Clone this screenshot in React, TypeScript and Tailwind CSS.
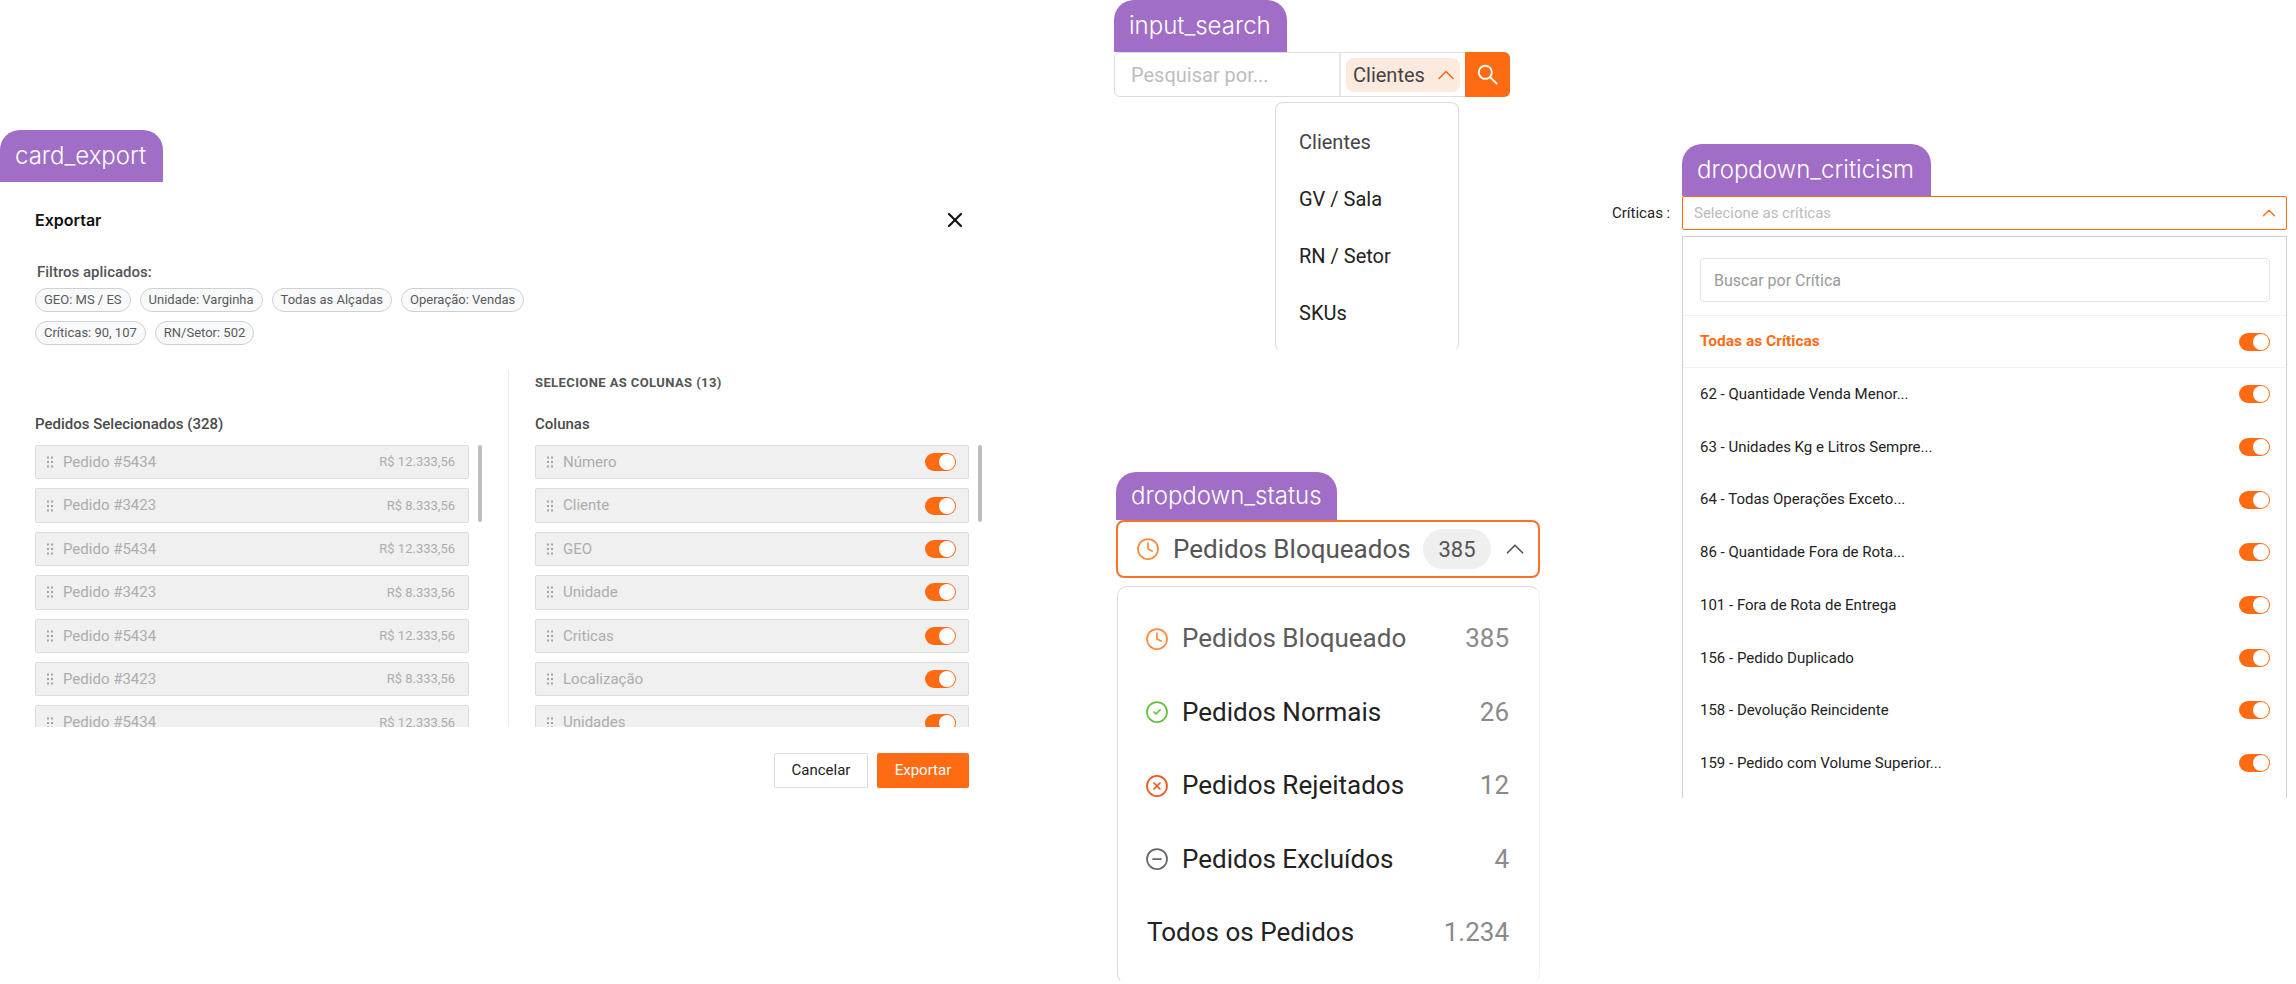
import React from 'react';
import { ChevronUp, CircleCheck, CircleMinus, CircleX, Clock, X } from 'lucide-react';

const pedidos = [
    { id: '#5434', valor: 'R$ 12.333,56' },
    { id: '#3423', valor: 'R$ 8.333,56' },
    { id: '#5434', valor: 'R$ 12.333,56' },
    { id: '#3423', valor: 'R$ 8.333,56' },
    { id: '#5434', valor: 'R$ 12.333,56' },
    { id: '#3423', valor: 'R$ 8.333,56' },
    { id: '#5434', valor: 'R$ 12.333,56' },
];
const colunas = ['Número', 'Cliente', 'GEO', 'Unidade', 'Criticas', 'Localização', 'Unidades'];
const filtros = ['GEO: MS / ES', 'Unidade: Varginha', 'Todas as Alçadas', 'Operação: Vendas', 'Críticas: 90, 107', 'RN/Setor: 502'];
const criticas = [
    '62 - Quantidade Venda Menor...',
    '63 - Unidades Kg e Litros Sempre...',
    '64 - Todas Operações Exceto...',
    '86 - Quantidade Fora de Rota...',
    '101 - Fora de Rota de Entrega',
    '156 - Pedido Duplicado',
    '158 - Devolução Reincidente',
    '159 - Pedido com Volume Superior...',
];

const Toggle: React.FC = () => (
    <span className="flex h-[18px] w-[31px] shrink-0 items-center justify-end rounded-full bg-[#ff6b13] pr-[1px]">
        <span className="h-[16px] w-[16px] rounded-full bg-white" />
    </span>
);

const Handle: React.FC = () => (
    <svg width="8" height="12" viewBox="0 0 8 12" className="shrink-0 fill-[#a3a3a3]">
        {[0, 4.5, 9].map((y) => (
            <g key={y}>
                <rect x="1" y={y + 0.5} width="2" height="2" />
                <rect x="5" y={y + 0.5} width="2" height="2" />
            </g>
        ))}
    </svg>
);

const Tab: React.FC<{ label: string; className: string }> = ({ label, className }) => (
    <div className={`flex items-center rounded-t-[20px] bg-[#a06ec6] pl-[15px] font-['Inter',sans-serif] text-[24px] font-light text-white ${className}`}>
        {label}
    </div>
);

const Scrollbar: React.FC = () => <div className="h-[77px] w-[4px] shrink-0 rounded-full bg-[#bdbdbd]" />;

const CardExport: React.FC = () => (
    <section className="absolute left-0 top-[130px] w-[1006px]">
        <Tab label="card_export" className="h-[52px] w-[163px]" />
        <div className="h-[633px] pl-[35px]">
            <div className="mt-[26px] flex h-[24px] items-center justify-between pr-[39px]">
                <h2 className="font-['Inter',sans-serif] text-[16px] font-semibold text-[#111]">Exportar</h2>
                <X size={24} strokeWidth={2.2} className="text-[#111]" />
            </div>
            <div className="pt-[32px]">
                <p className="pl-[2px] text-[15px] font-medium leading-[16px] text-[#555]">Filtros aplicados:</p>
                <div className="mt-[8px] flex w-[490px] flex-wrap gap-[9px]">
                    {filtros.map((filtro) => (
                        <span key={filtro} className="flex h-[24px] items-center rounded-full border border-[#d0d0d0] bg-[#f8f9fb] px-[8px] text-[13px] text-[#5a5a5a]">
                            {filtro}
                        </span>
                    ))}
                </div>
            </div>
            <div className="mt-[25px] flex h-[357px] overflow-hidden">
                <div className="w-[473px] shrink-0 pt-[46px]">
                    <h3 className="text-[15px] font-medium leading-[16px] text-[#4a4a4a]">Pedidos Selecionados (328)</h3>
                    <div className="mt-[13px] flex gap-[9px]">
                        <ul className="flex w-[434px] shrink-0 flex-col gap-[9px]">
                            {pedidos.map((pedido, i) => (
                                <li key={i} className="flex h-[34.4px] shrink-0 items-center rounded-[2px] border border-[#dcdcdc] bg-[#f0f0f0] pl-[10px] pr-[13px]">
                                    <Handle />
                                    <span className="ml-[9px] text-[15px] text-[#adadad]">Pedido {pedido.id}</span>
                                    <span className="ml-auto text-[13px] text-[#adadad]">{pedido.valor}</span>
                                </li>
                            ))}
                        </ul>
                        <Scrollbar />
                    </div>
                </div>
                <div className="border-l border-[#ececec] pl-[26px] pt-[5px]">
                    <h3 className="text-[13px] font-bold leading-[16px] tracking-[0.4px] text-[#555]">SELECIONE AS COLUNAS (13)</h3>
                    <h3 className="mt-[25px] text-[15px] font-medium leading-[16px] text-[#4a4a4a]">Colunas</h3>
                    <div className="mt-[13px] flex gap-[9px]">
                        <ul className="flex w-[434px] shrink-0 flex-col gap-[9px]">
                            {colunas.map((coluna) => (
                                <li key={coluna} className="flex h-[34.4px] shrink-0 items-center rounded-[2px] border border-[#dcdcdc] bg-[#f0f0f0] pl-[10px] pr-[12px]">
                                    <Handle />
                                    <span className="ml-[9px] text-[15px] text-[#adadad]">{coluna}</span>
                                    <span className="ml-auto"><Toggle /></span>
                                </li>
                            ))}
                        </ul>
                        <Scrollbar />
                    </div>
                </div>
            </div>
            <div className="mt-[26px] flex justify-end gap-[9px] pr-[37px]">
                <button className="h-[35px] w-[94px] rounded-[2px] border border-[#dcdcdc] bg-white text-[15px] text-[#222]">Cancelar</button>
                <button className="h-[35px] w-[92px] rounded-[2px] bg-[#ff6b13] text-[15px] text-white">Exportar</button>
            </div>
        </div>
    </section>
);

const InputSearch: React.FC = () => (
    <section className="absolute left-[1114px] top-0 w-[396px]">
        <Tab label="input_search" className="h-[52px] w-[173px]" />
        <div className="flex h-[45px] rounded-[6px] border border-[#dddddd]">
            <span className="flex w-[224px] items-center pl-[16px] text-[20px] text-[#bdbdbd]">Pesquisar por...</span>
            <div className="flex flex-1 items-center border-l-2 border-[#e8e8e8] pl-[5px]">
                <span className="flex h-[34px] w-[114px] items-center justify-between rounded-[8px] bg-[#fdeadf] pl-[7px] text-[20px] text-[#444]">
                    Clientes
                    <ChevronUp size={28} strokeWidth={1.4} className="text-[#ff6b13]" />
                </span>
            </div>
            <span className="-my-px -mr-px flex w-[45px] items-center justify-center rounded-r-[6px] bg-[#ff6b13]">
                <svg width="21" height="21" viewBox="0 0 24 24" fill="none" stroke="white" strokeWidth="2.2" strokeLinecap="round">
                    <circle cx="9.5" cy="9.5" r="7.5" />
                    <path d="M15 15l7.5 7.5" />
                </svg>
            </span>
        </div>
        <ul className="ml-[161px] mt-[5px] flex h-[250px] w-[184px] flex-col justify-center rounded-[8px] border border-[#dcdcdc] border-b-transparent pl-[23px] text-[20px] text-[#222]">
            {['Clientes', 'GV / Sala', 'RN / Setor', 'SKUs'].map((item, i) => (
                <li key={item} className={`flex h-[57px] items-center ${i === 0 ? 'text-[#444]' : ''}`}>{item}</li>
            ))}
        </ul>
    </section>
);

const statusItems = [
    { label: 'Pedidos Bloqueado', count: '385', icon: <Clock size={24} strokeWidth={1.75} className="text-[#ff8a3d]" />, tone: 'text-[#5c5c5c]' },
    { label: 'Pedidos Normais', count: '26', icon: <CircleCheck size={24} strokeWidth={1.75} className="text-[#62c23f]" />, tone: 'text-[#222]' },
    { label: 'Pedidos Rejeitados', count: '12', icon: <CircleX size={24} strokeWidth={1.75} className="text-[#f0561d]" />, tone: 'text-[#222]' },
    { label: 'Pedidos Excluídos', count: '4', icon: <CircleMinus size={24} strokeWidth={1.75} className="text-[#666]" />, tone: 'text-[#222]' },
];

const DropdownStatus: React.FC = () => (
    <section className="absolute left-[1116px] top-[472px] w-[424px]">
        <Tab label="dropdown_status" className="h-[48px] w-[221px]" />
        <div className="flex h-[58px] items-center rounded-[8px] border-2 border-[#f5742a] pl-[18px] pr-[8px]">
            <Clock size={24} strokeWidth={1.75} className="text-[#ff8a3d]" />
            <span className="ml-[13px] text-[26px] text-[#555]">Pedidos Bloqueados</span>
            <span className="ml-auto flex h-[40px] w-[68px] items-center justify-center rounded-full bg-[#efefef] text-[22px] text-[#555]">385</span>
            <ChevronUp size={30} strokeWidth={1.4} className="ml-[9px] text-[#555]" />
        </div>
        <div className="ml-px mt-[8px] h-[398px] rounded-[10px] border border-[#dcdcdc] border-b-transparent border-r-[#f4f4f4] pl-[27px] pr-[30px] pt-[15px]">
            {statusItems.map((item) => (
                <div key={item.label} className="flex h-[73.5px] items-center text-[26px]">
                    {item.icon}
                    <span className={`ml-[13px] ${item.tone}`}>{item.label}</span>
                    <span className="ml-auto text-[#8a8a8a]">{item.count}</span>
                </div>
            ))}
            <div className="flex h-[73.5px] items-center pl-[2px] text-[26px]">
                <span className="text-[#222]">Todos os Pedidos</span>
                <span className="ml-auto text-[#8a8a8a]">1.234</span>
            </div>
        </div>
    </section>
);

const DropdownCriticism: React.FC = () => (
    <section className="absolute left-[1612px] top-[144px] w-[675px]">
        <Tab label="dropdown_criticism" className="ml-[70px] h-[52px] w-[249px]" />
        <div className="flex items-center">
            <span className="w-[70px] shrink-0 text-[15px] text-[#222]">Críticas :</span>
            <div className="flex h-[34px] w-[605px] items-center justify-between rounded-[2px] border-[1.5px] border-[#ff6b13] pl-[11px] pr-[6px] text-[15px] text-[#bbbbbb]">
                Selecione as críticas
                <ChevronUp size={22} strokeWidth={1.4} className="text-[#ff6b13]" />
            </div>
        </div>
        <div className="ml-[70px] mt-[6px] h-[562px] w-[605px] overflow-hidden border border-b-0 border-[#d0d0d0]">
            <div className="border-b border-[#f0f0f0] pb-[13px] pl-[17px] pr-[16px] pt-[21px]">
                <div className="flex h-[44px] items-center rounded-[4px] border border-[#e4e4e4] pl-[13px] pt-[1px] text-[16px] text-[#9a9a9a]">Buscar por Crítica</div>
            </div>
            <div className="flex h-[52px] items-center justify-between border-b border-[#f0f0f0] pl-[17px] pr-[16px] text-[15.5px] font-bold text-[#ff6b13]">
                Todas as Críticas
                <Toggle />
            </div>
            {criticas.map((critica) => (
                <div key={critica} className="flex h-[52.7px] items-center justify-between pl-[17px] pr-[16px] text-[15px] text-[#222]">
                    {critica}
                    <Toggle />
                </div>
            ))}
        </div>
    </section>
);

const App: React.FC = () => (
    <div className="relative h-[984px] w-[2296px] overflow-hidden bg-white font-['Roboto',sans-serif]">
        <CardExport />
        <InputSearch />
        <DropdownStatus />
        <DropdownCriticism />
    </div>
);

export default App;
